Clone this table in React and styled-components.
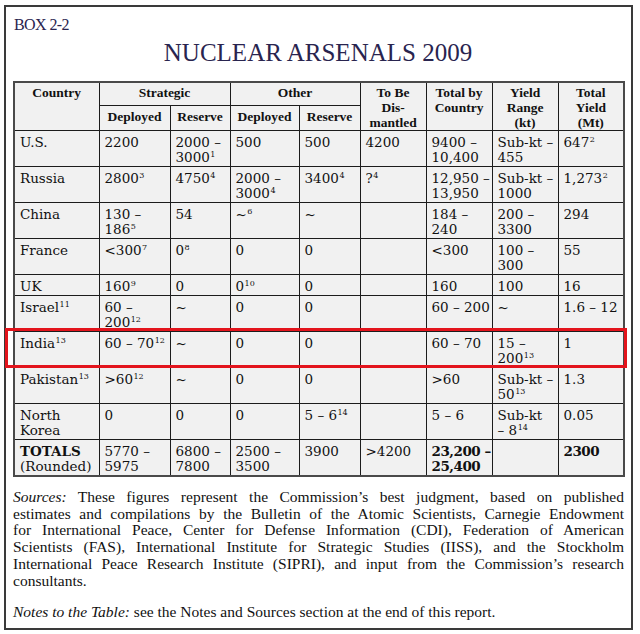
import styled, { createGlobalStyle } from 'styled-components';

const GlobalStyle = createGlobalStyle`
  body {
    margin: 0;
    background: #ffffff;
  }
`;

// 바깥 상자
const Frame = styled.div`
  position: relative;
  box-sizing: border-box;
  width: 629px;
  height: 625px;
  margin: 5px 0 0 4px;
  padding: 9px 8px 0 7px;
  border: 2px solid #3a3a3a;
  background: #ffffff;
`;

const BoxLabel = styled.div`
  margin-left: 1px;
  font-family: 'Liberation Serif', serif;
  font-size: 16px;
  line-height: 18px;
  color: #29244f;
  letter-spacing: -0.6px;
`;

const Title = styled.h1`
  margin: 4px 0 13px;
  text-align: center;
  font-family: 'Liberation Serif', serif;
  font-size: 25px;
  font-weight: 400;
  line-height: 30px;
  color: #29244f;
`;

// 표
const TableWrap = styled.div`
  position: relative;
`;

const Table = styled.table`
  width: 610px;
  table-layout: fixed;
  border-collapse: collapse;
  border: 2px solid #4a4a4a;
`;

const HeadCell = styled.th`
  padding: ${({ $sub }) => ($sub ? '3px 2px 0' : '2px 2px 0')};
  vertical-align: top;
  text-align: center;
  font-family: 'Liberation Serif', serif;
  font-size: 13.5px;
  font-weight: 700;
  line-height: 15px;
  color: #111;
  background: #f1f1f1;
  border: 1px solid #1c1c1c;
`;

const Cell = styled.td`
  padding: 4px 2px 1px 5px;
  vertical-align: top;
  text-align: left;
  font-family: 'DejaVu Serif', serif;
  font-size: 13.5px;
  font-weight: ${({ $bold }) => ($bold ? 700 : 400)};
  letter-spacing: ${({ $bold }) => ($bold ? '-0.5px' : '0')};
  line-height: 15px;
  color: #111;
  background: #f1f1f1;
  border: 1px solid #1c1c1c;
`;

const Line = styled.div`
  white-space: nowrap;
  font-weight: ${({ $bold }) => ($bold ? 700 : 'inherit')};
`;

const Sup = styled.sup`
  font-size: 8px;
  line-height: 0;
  vertical-align: 5px;
  margin-left: 0.5px;
`;

// 인도 행 강조 표시
const Highlight = styled.div`
  position: absolute;
  left: -8px;
  top: 247px;
  width: 622px;
  height: 40px;
  box-sizing: border-box;
  border: 3px solid #e3141c;
  pointer-events: none;
`;

// 하단 출처
const Notes = styled.div`
  margin-top: 12px;
  width: 611px;
  font-family: 'Liberation Serif', serif;
  font-size: 15.5px;
  line-height: 16.7px;
  color: #111;
`;

const NoteLine = styled.div`
  text-align: justify;
  text-align-last: ${({ $last }) => ($last ? 'left' : 'justify')};
`;

const NoteBlock = styled.div`
  margin-top: ${({ $gap }) => ($gap ? 15 : 0)}px;
`;

const Em = styled.i`
  font-style: italic;
`;

const widths = [85, 71, 60, 69, 61, 66, 66, 66, 66];

const rows = [
  ['U.S.', '2200', ['2000 –', '3000^1'], '500', '500', '4200', ['9400 –', '10,400'], ['Sub-kt –', '455'], '647^2'],
  ['Russia', '2800^3', '4750^4', ['2000 –', '3000^4'], '3400^4', '?^4', ['12,950 –', '13,950'], ['Sub-kt –', '1000'], '1,273^2'],
  ['China', ['130 –', '186^5'], '54', '~^6', '~', '', ['184 –', '240'], ['200 –', '3300'], '294'],
  ['France', '<300^7', '0^8', '0', '0', '', '<300', ['100 –', '300'], '55'],
  ['UK', '160^9', '0', '0^10', '0', '', '160', '100', '16'],
  ['Israel^11', ['60 –', '200^12'], '~', '0', '0', '', '60 – 200', '~', '1.6 – 12'],
  ['India^13', '60 – 70^12', '~', '0', '0', '', '60 – 70', ['15 –', '200^13'], '1'],
  ['Pakistan^13', '>60^12', '~', '0', '0', '', '>60', ['Sub-kt –', '50^13'], '1.3'],
  [['North', 'Korea'], '0', '0', '0', '5 – 6^14', '', '5 – 6', ['Sub-kt', '– 8^14'], '0.05'],
];

const Text = ({ value }) => {
  const [main, sup] = value.split('^');
  return (
    <>
      {main}
      {sup && <Sup>{sup}</Sup>}
    </>
  );
};

const CellLines = ({ value, bold }) => {
  const lines = Array.isArray(value) ? value : [value];
  return lines.map((line, i) => (
    <Line key={i} $bold={bold && bold[i]}>
      <Text value={line} />
    </Line>
  ));
};

const App = () => (
  <>
    <GlobalStyle />
    <Frame>
      <BoxLabel>BOX 2-2</BoxLabel>
      <Title>NUCLEAR ARSENALS 2009</Title>

      <TableWrap>
        <Table>
          <colgroup>
            {widths.map((w, i) => (
              <col key={i} style={{ width: w }} />
            ))}
          </colgroup>
          <thead>
            <tr>
              <HeadCell rowSpan={2}>Country</HeadCell>
              <HeadCell colSpan={2}>Strategic</HeadCell>
              <HeadCell colSpan={2}>Other</HeadCell>
              <HeadCell rowSpan={2}>
                To Be
                <br />
                Dis-
                <br />
                mantled
              </HeadCell>
              <HeadCell rowSpan={2}>
                Total by
                <br />
                Country
              </HeadCell>
              <HeadCell rowSpan={2}>
                Yield
                <br />
                Range
                <br />
                (kt)
              </HeadCell>
              <HeadCell rowSpan={2}>
                Total
                <br />
                Yield
                <br />
                (Mt)
              </HeadCell>
            </tr>
            <tr>
              <HeadCell $sub>Deployed</HeadCell>
              <HeadCell $sub>Reserve</HeadCell>
              <HeadCell $sub>Deployed</HeadCell>
              <HeadCell $sub>Reserve</HeadCell>
            </tr>
          </thead>
          <tbody>
            {rows.map((row, r) => (
              <tr key={r}>
                {row.map((v, c) => (
                  <Cell key={c}>
                    <CellLines value={v} />
                  </Cell>
                ))}
              </tr>
            ))}
            <tr>
              <Cell>
                <CellLines value={['TOTALS', '(Rounded)']} bold={[true, false]} />
              </Cell>
              <Cell>
                <CellLines value={['5770 –', '5975']} />
              </Cell>
              <Cell>
                <CellLines value={['6800 –', '7800']} />
              </Cell>
              <Cell>
                <CellLines value={['2500 –', '3500']} />
              </Cell>
              <Cell>3900</Cell>
              <Cell>&gt;4200</Cell>
              <Cell $bold>
                <CellLines value={['23,200 –', '25,400']} />
              </Cell>
              <Cell />
              <Cell $bold>2300</Cell>
            </tr>
          </tbody>
        </Table>
        <Highlight />
      </TableWrap>

      <Notes>
        <NoteBlock>
          <NoteLine>
            <Em>Sources:</Em> These figures represent the Commission’s best judgment, based on published
          </NoteLine>
          <NoteLine>
            estimates and compilations by the Bulletin of the Atomic Scientists, Carnegie Endowment
          </NoteLine>
          <NoteLine>
            for International Peace, Center for Defense Information (CDI), Federation of American
          </NoteLine>
          <NoteLine>
            Scientists (FAS), International Institute for Strategic Studies (IISS), and the Stockholm
          </NoteLine>
          <NoteLine>
            International Peace Research Institute (SIPRI), and input from the Commission’s research
          </NoteLine>
          <NoteLine $last>consultants.</NoteLine>
        </NoteBlock>
        <NoteBlock $gap>
          <NoteLine $last>
            <Em>Notes to the Table:</Em> see the Notes and Sources section at the end of this report.
          </NoteLine>
        </NoteBlock>
      </Notes>
    </Frame>
  </>
);

export default App;
